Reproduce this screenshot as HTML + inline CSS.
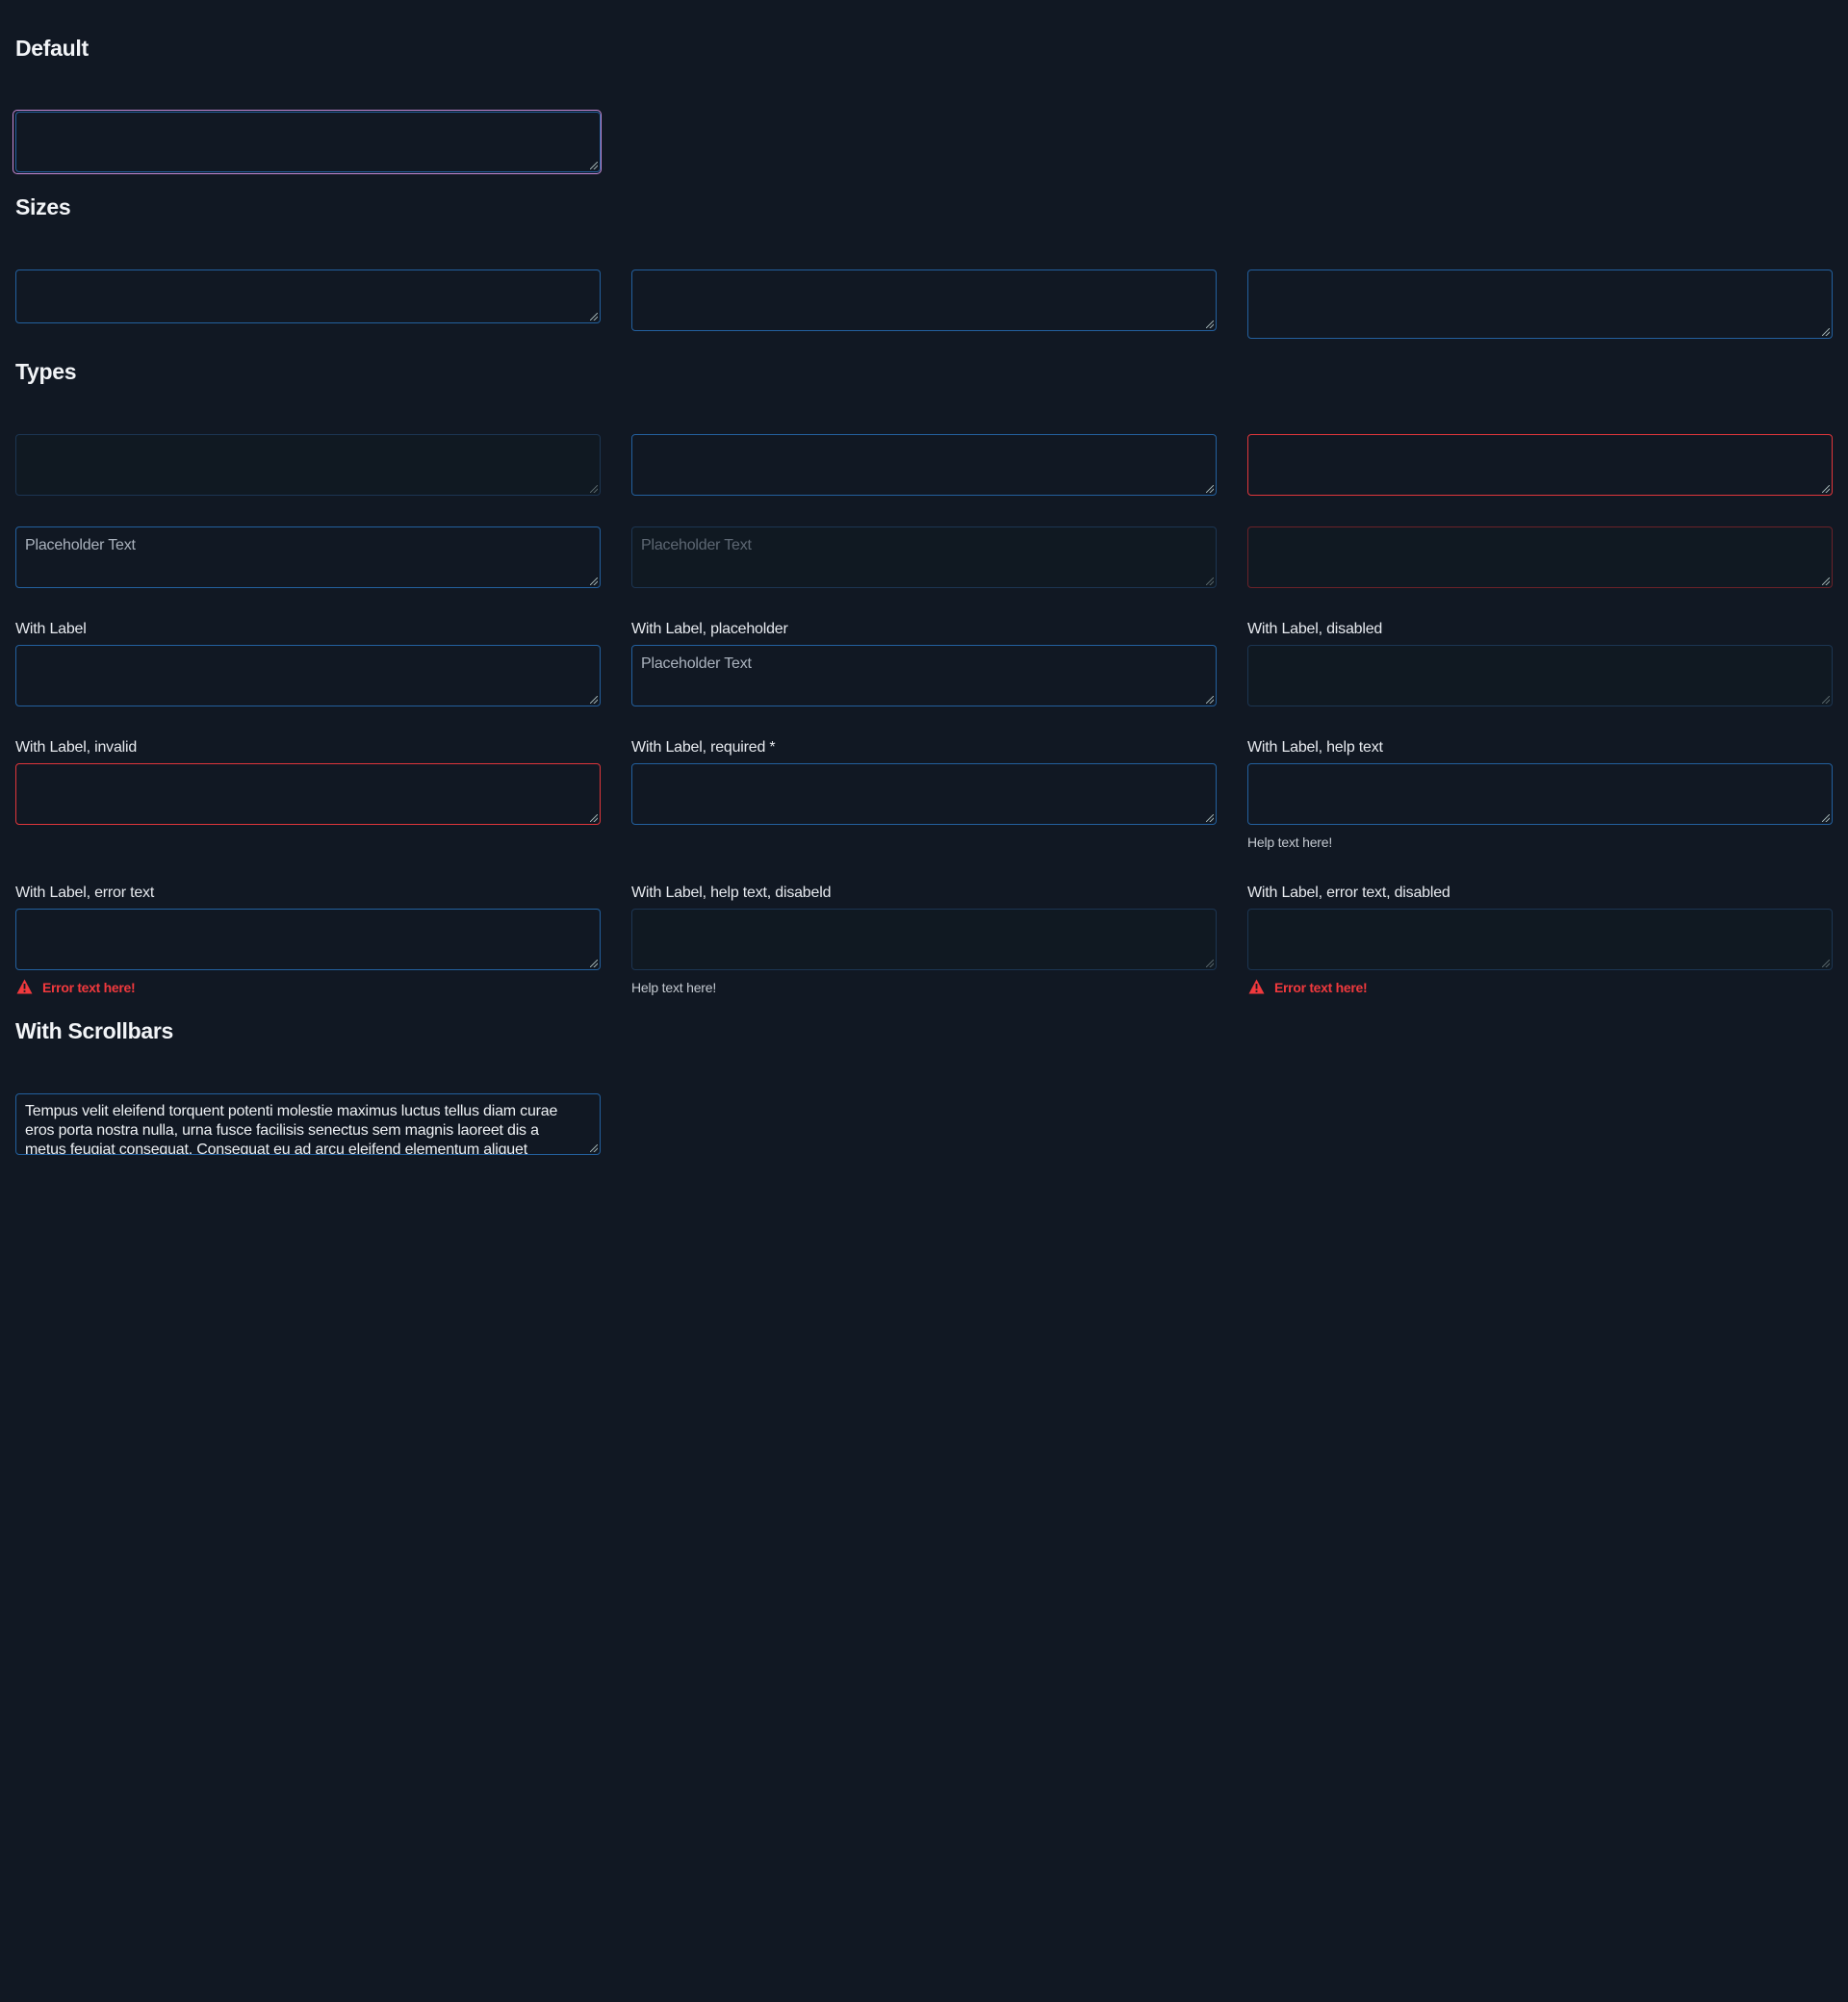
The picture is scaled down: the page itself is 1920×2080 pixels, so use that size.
<!DOCTYPE html>
<html><head><meta charset="utf-8"><style>
html,body{margin:0;padding:0;background:#111823;width:1920px;height:2080px;overflow:hidden}
body{position:relative;font-family:"Liberation Sans",Arial,sans-serif;color:#e6e9ee}
.h{position:absolute;left:16px;font-size:23px;font-weight:bold;color:#f2f4f7;line-height:30px;letter-spacing:-0.3px}
.t{position:absolute;box-sizing:border-box;width:608px;height:64px;border:1.5px solid #23609e;border-radius:4px;background:#111823;padding:9px;font-size:16px;line-height:20px;color:#aab2bd;overflow:hidden;letter-spacing:-0.2px}
.t::after{content:"";position:absolute;right:2px;bottom:2px;width:8px;height:8px;background:linear-gradient(135deg,transparent 45%,#9aa 45%,#9aa 55%,transparent 55%,transparent 70%,#9aa 70%,#9aa 80%,transparent 80%)}
.d{border-color:#1c3552;background:#101922}
.d::after{opacity:.5}
.r{border-color:#e0363b}
.rd{border-color:#6b2229;background:#101922}
.ph2{color:#5d6773}
.l{position:absolute;font-size:16px;color:#e6e9ee;line-height:20px;letter-spacing:-0.2px}
.hp{position:absolute;font-size:14px;color:#c4c9d0;line-height:18px;letter-spacing:-0.2px}
.e{position:absolute;font-size:14px;font-weight:bold;color:#f0393d;line-height:18px;letter-spacing:-0.3px}
.e svg{position:absolute;left:-27px;top:0}
</style></head><body>
<div class="h" style="top:35px">Default</div>
<div style="position:absolute;left:13px;top:114px;width:612px;height:67px;border:1.5px solid #c58ad6;border-radius:5px;box-sizing:border-box"></div>
<div class="t" style="left:16px;top:116px;height:63px"></div>

<div class="h" style="top:200px">Sizes</div>
<div class="t" style="left:16px;top:280px;height:56px"></div>
<div class="t" style="left:656px;top:280px;height:64px"></div>
<div class="t" style="left:1296px;top:280px;height:72px"></div>

<div class="h" style="top:371px">Types</div>
<div class="t d" style="left:16px;top:451px"></div>
<div class="t" style="left:656px;top:451px"></div>
<div class="t r" style="left:1296px;top:451px"></div>

<div class="t" style="left:16px;top:547px">Placeholder Text</div>
<div class="t d ph2" style="left:656px;top:547px">Placeholder Text</div>
<div class="t rd" style="left:1296px;top:547px"></div>

<div class="l" style="left:16px;top:644px">With Label</div>
<div class="l" style="left:656px;top:644px">With Label, placeholder</div>
<div class="l" style="left:1296px;top:644px">With Label, disabled</div>
<div class="t" style="left:16px;top:670px"></div>
<div class="t" style="left:656px;top:670px">Placeholder Text</div>
<div class="t d" style="left:1296px;top:670px"></div>

<div class="l" style="left:16px;top:767px">With Label, invalid</div>
<div class="l" style="left:656px;top:767px">With Label, required *</div>
<div class="l" style="left:1296px;top:767px">With Label, help text</div>
<div class="t r" style="left:16px;top:793px"></div>
<div class="t" style="left:656px;top:793px"></div>
<div class="t" style="left:1296px;top:793px"></div>
<div class="hp" style="left:1296px;top:866px">Help text here!</div>

<div class="l" style="left:16px;top:918px">With Label, error text</div>
<div class="l" style="left:656px;top:918px">With Label, help text, disabeld</div>
<div class="l" style="left:1296px;top:918px">With Label, error text, disabled</div>
<div class="t" style="left:16px;top:944px"></div>
<div class="t d" style="left:656px;top:944px"></div>
<div class="t d" style="left:1296px;top:944px"></div>
<div class="e" style="left:44px;top:1017px"><svg width="17" height="16" viewBox="0 0 17 16"><path d="M8.5 0.5L16.5 15.5H0.5Z" fill="#f0393d"/><rect x="7.6" y="5" width="1.8" height="5.5" fill="#111823"/><rect x="7.6" y="12" width="1.8" height="1.8" fill="#111823"/></svg>Error text here!</div>
<div class="hp" style="left:656px;top:1017px">Help text here!</div>
<div class="e" style="left:1324px;top:1017px"><svg width="17" height="16" viewBox="0 0 17 16"><path d="M8.5 0.5L16.5 15.5H0.5Z" fill="#f0393d"/><rect x="7.6" y="5" width="1.8" height="5.5" fill="#111823"/><rect x="7.6" y="12" width="1.8" height="1.8" fill="#111823"/></svg>Error text here!</div>

<div class="h" style="top:1056px">With Scrollbars</div>
<div class="t" style="left:16px;top:1136px;color:#eef1f4;padding-top:8px;padding-right:24px">Tempus velit eleifend torquent potenti molestie maximus luctus tellus diam curae eros porta nostra nulla, urna fusce facilisis senectus sem magnis laoreet dis a metus feugiat consequat. Consequat eu ad arcu eleifend elementum aliquet</div>
</body></html>
